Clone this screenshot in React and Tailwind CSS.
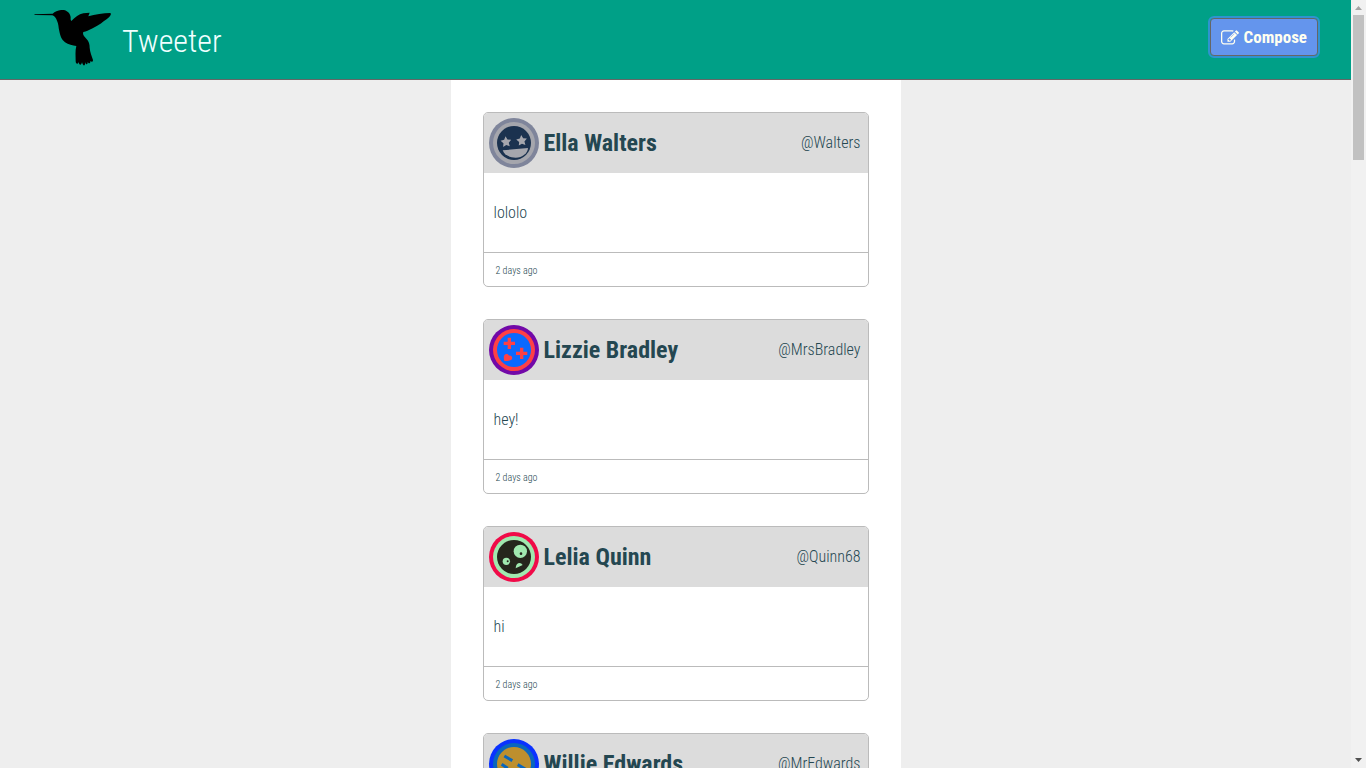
import React from "react";

function Bird() {
  return (
    <svg className="h-14 w-[77px] shrink-0" viewBox="42 30 231 168" aria-hidden="true">
      <path
        fill="#000"
        d="M42 43 L98 41 C106 33 118 29 131 30 C143 32 151 41 152 52 C152 56 151 60 154 63 C166 52 176 43 190 40 L209 38 L205 49 C225 44 250 39 271 39 L273 42 C271 50 262 56 251 64 C240 73 229 80 215 86 C206 90 199 94 190 96 C187 104 192 109 199 116 C207 124 209 132 209 143 C210 156 215 168 219 180 C219 186 215 187 211 183 C212 191 206 193 203 185 C204 195 198 196 195 186 C197 199 189 200 186 187 C184 197 177 196 176 186 C174 194 167 193 167 184 C167 170 165 153 169 138 C158 137 145 134 135 127 C124 118 121 108 118 94 C115 81 116 72 111 62 C108 54 104 48 97 46 L45 45 Z"
      />
    </svg>
  );
}

function EditIcon() {
  return (
    <svg className="size-[18px]" viewBox="0 0 1792 1792" fill="currentColor" aria-hidden="true">
      <path d="M888 1184l116-116-152-152-116 116v56h96v96h56zm440-720q-16-16-33 1l-350 350q-17 17-1 33t33-1l350-350q17-17 1-33zm80 594v190q0 119-84.5 203.5t-203.5 84.5h-832q-119 0-203.5-84.5t-84.5-203.5v-832q0-119 84.5-203.5t203.5-84.5h832q63 0 117 25 15 7 18 23 3 17-9 29l-49 49q-14 14-32 8-23-6-45-6h-832q-66 0-113 47t-47 113v832q0 66 47 113t113 47h832q66 0 113-47t47-113v-126q0-13 9-22l64-64q15-15 35-7t20 29zm-96-738l288 288-672 672h-288v-288zm444 132l-92 92-288-288 92-92q28-28 68-28t68 28l152 152q28 28 28 68t-28 68z" />
    </svg>
  );
}

function Avatar({ outer, ring, face, children }) {
  return (
    <svg className="size-[50px] shrink-0" viewBox="0 0 150 150" aria-hidden="true">
      <circle cx="75" cy="75" r="75" fill={outer} />
      <circle cx="75" cy="75" r="63" fill={ring} />
      <circle cx="75" cy="75" r="51" fill={face} />
      {children}
    </svg>
  );
}

const star = "M0-16 L5-6 L16-4 L8 4 L10 15 L0 10 L-10 15 L-8 4 L-16-4 L-5-6 Z";

const tweets = [
  {
    name: "Ella Walters",
    handle: "@Walters",
    text: "lololo",
    avatar: (
      <Avatar outer="#7f859b" ring="#a5a6ad" face="#1b324f">
        <path d={star} fill="#a5a6ad" transform="translate(51 71) rotate(-5)" />
        <path d={star} fill="#a5a6ad" transform="translate(98 67) rotate(-5)" />
        <path d="M41 97 L117 90 C116 106 100 119 80 119 C61 119 45 110 41 97 Z" fill="#a5a6ad" />
      </Avatar>
    ),
  },
  {
    name: "Lizzie Bradley",
    handle: "@MrsBradley",
    text: "hey!",
    avatar: (
      <Avatar outer="#7209a8" ring="#ff4045" face="#0b69ff">
        <path d="M61 38v34M44 55h34M98 68v34M81 85h34" stroke="#ff4045" strokeWidth="10" />
        <path d="M46 108 C44 101 44 97 45 93 C48 85 58 86 60 92 C68 90 73 99 67 104 C62 108 54 108 46 108 Z" fill="#ff4045" />
      </Avatar>
    ),
  },
  {
    name: "Lelia Quinn",
    handle: "@Quinn68",
    text: "hi",
    avatar: (
      <Avatar outer="#f00a48" ring="#a0e8af" face="#25261c">
        <circle cx="94" cy="58" r="20" fill="#a0e8af" />
        <circle cx="96" cy="65" r="4" fill="#25261c" />
        <circle cx="52" cy="88" r="11" fill="#a0e8af" />
        <circle cx="56" cy="88" r="3" fill="#25261c" />
        <path d="M80 109 C80 92 95 88 101 99 Z" fill="#a0e8af" />
      </Avatar>
    ),
  },
  {
    name: "Willie Edwards",
    handle: "@MrEdwards",
    text: "hello",
    avatar: (
      <Avatar outer="#0a32ff" ring="#0a66bd" face="#bd8f2e">
        <path d="M46 51 L70 65 M86 77 L110 91 M38 76 L56 88" stroke="#0a66bd" strokeWidth="9" />
        <path d="M48 104 C62 116 82 116 94 106" stroke="#0a66bd" strokeWidth="7" fill="none" />
      </Avatar>
    ),
  },
];

function Tweet({ tweet }) {
  return (
    <article className="overflow-hidden rounded-[5px] border border-[#bbb]">
      <header className="flex h-15 items-center gap-[5px] bg-[#dcdcdc] pr-[7px] pl-[5px]">
        {tweet.avatar}
        <h2 className="flex-1 text-2xl font-bold">{tweet.name}</h2>
        <span className="font-light">{tweet.handle}</span>
      </header>
      <p className="px-2.5 pt-7 pb-[27px] leading-6 font-light">{tweet.text}</p>
      <footer className="border-t border-[#bbb] px-3 pt-2.5 pb-[7px] text-[10px] leading-4 font-light">
        2 days ago
      </footer>
    </article>
  );
}

export default function App() {
  return (
    <div className="flex h-screen bg-[#eee] font-['Roboto_Condensed',Roboto,sans-serif] text-base text-[#244751]">
      <div className="flex min-w-0 flex-1 flex-col">
        <nav className="flex h-20 shrink-0 items-start justify-between border-b border-[#666] bg-[#00a087] pr-[33px] pl-[34px]">
          <a href="#top" className="flex items-start gap-[11px] pt-2.5 text-[#f0ffff]">
            <Bird />
            <span className="pt-2 text-[32px] leading-[46px] font-light">Tweeter</span>
          </a>
          <button
            type="button"
            className="mt-[18px] flex h-[38px] items-center gap-[5px] rounded-[4px] border border-[#666] bg-[#6495ed] px-2.5 pt-0.5 text-[17px] font-bold text-[#fffff0] outline-2 outline-[#2f93d0]"
          >
            <EditIcon />
            Compose
          </button>
        </nav>
        <div className="min-h-0 flex-1 overflow-y-auto [scrollbar-width:none]">
          <main id="top" className="mx-auto flex w-full max-w-[450px] flex-col gap-8 bg-white p-8">
            {tweets.map((tweet) => (
              <Tweet key={tweet.handle} tweet={tweet} />
            ))}
          </main>
        </div>
      </div>
      <div className="flex w-[15px] shrink-0 flex-col items-center justify-between bg-[#f1f1f1] py-1.5" aria-hidden="true">
        <svg className="h-1 w-[7px] shrink-0" viewBox="0 0 7 4">
          <path d="M0 4 L3.5 0 L7 4 Z" fill="#a3a3a3" />
        </svg>
        <div className="w-full flex-1 px-0.5 py-[5px]">
          <div className="h-[145px] bg-[#c1c1c1]" />
        </div>
        <svg className="h-1 w-[7px] shrink-0" viewBox="0 0 7 4">
          <path d="M0 0 L3.5 4 L7 0 Z" fill="#505050" />
        </svg>
      </div>
    </div>
  );
}
